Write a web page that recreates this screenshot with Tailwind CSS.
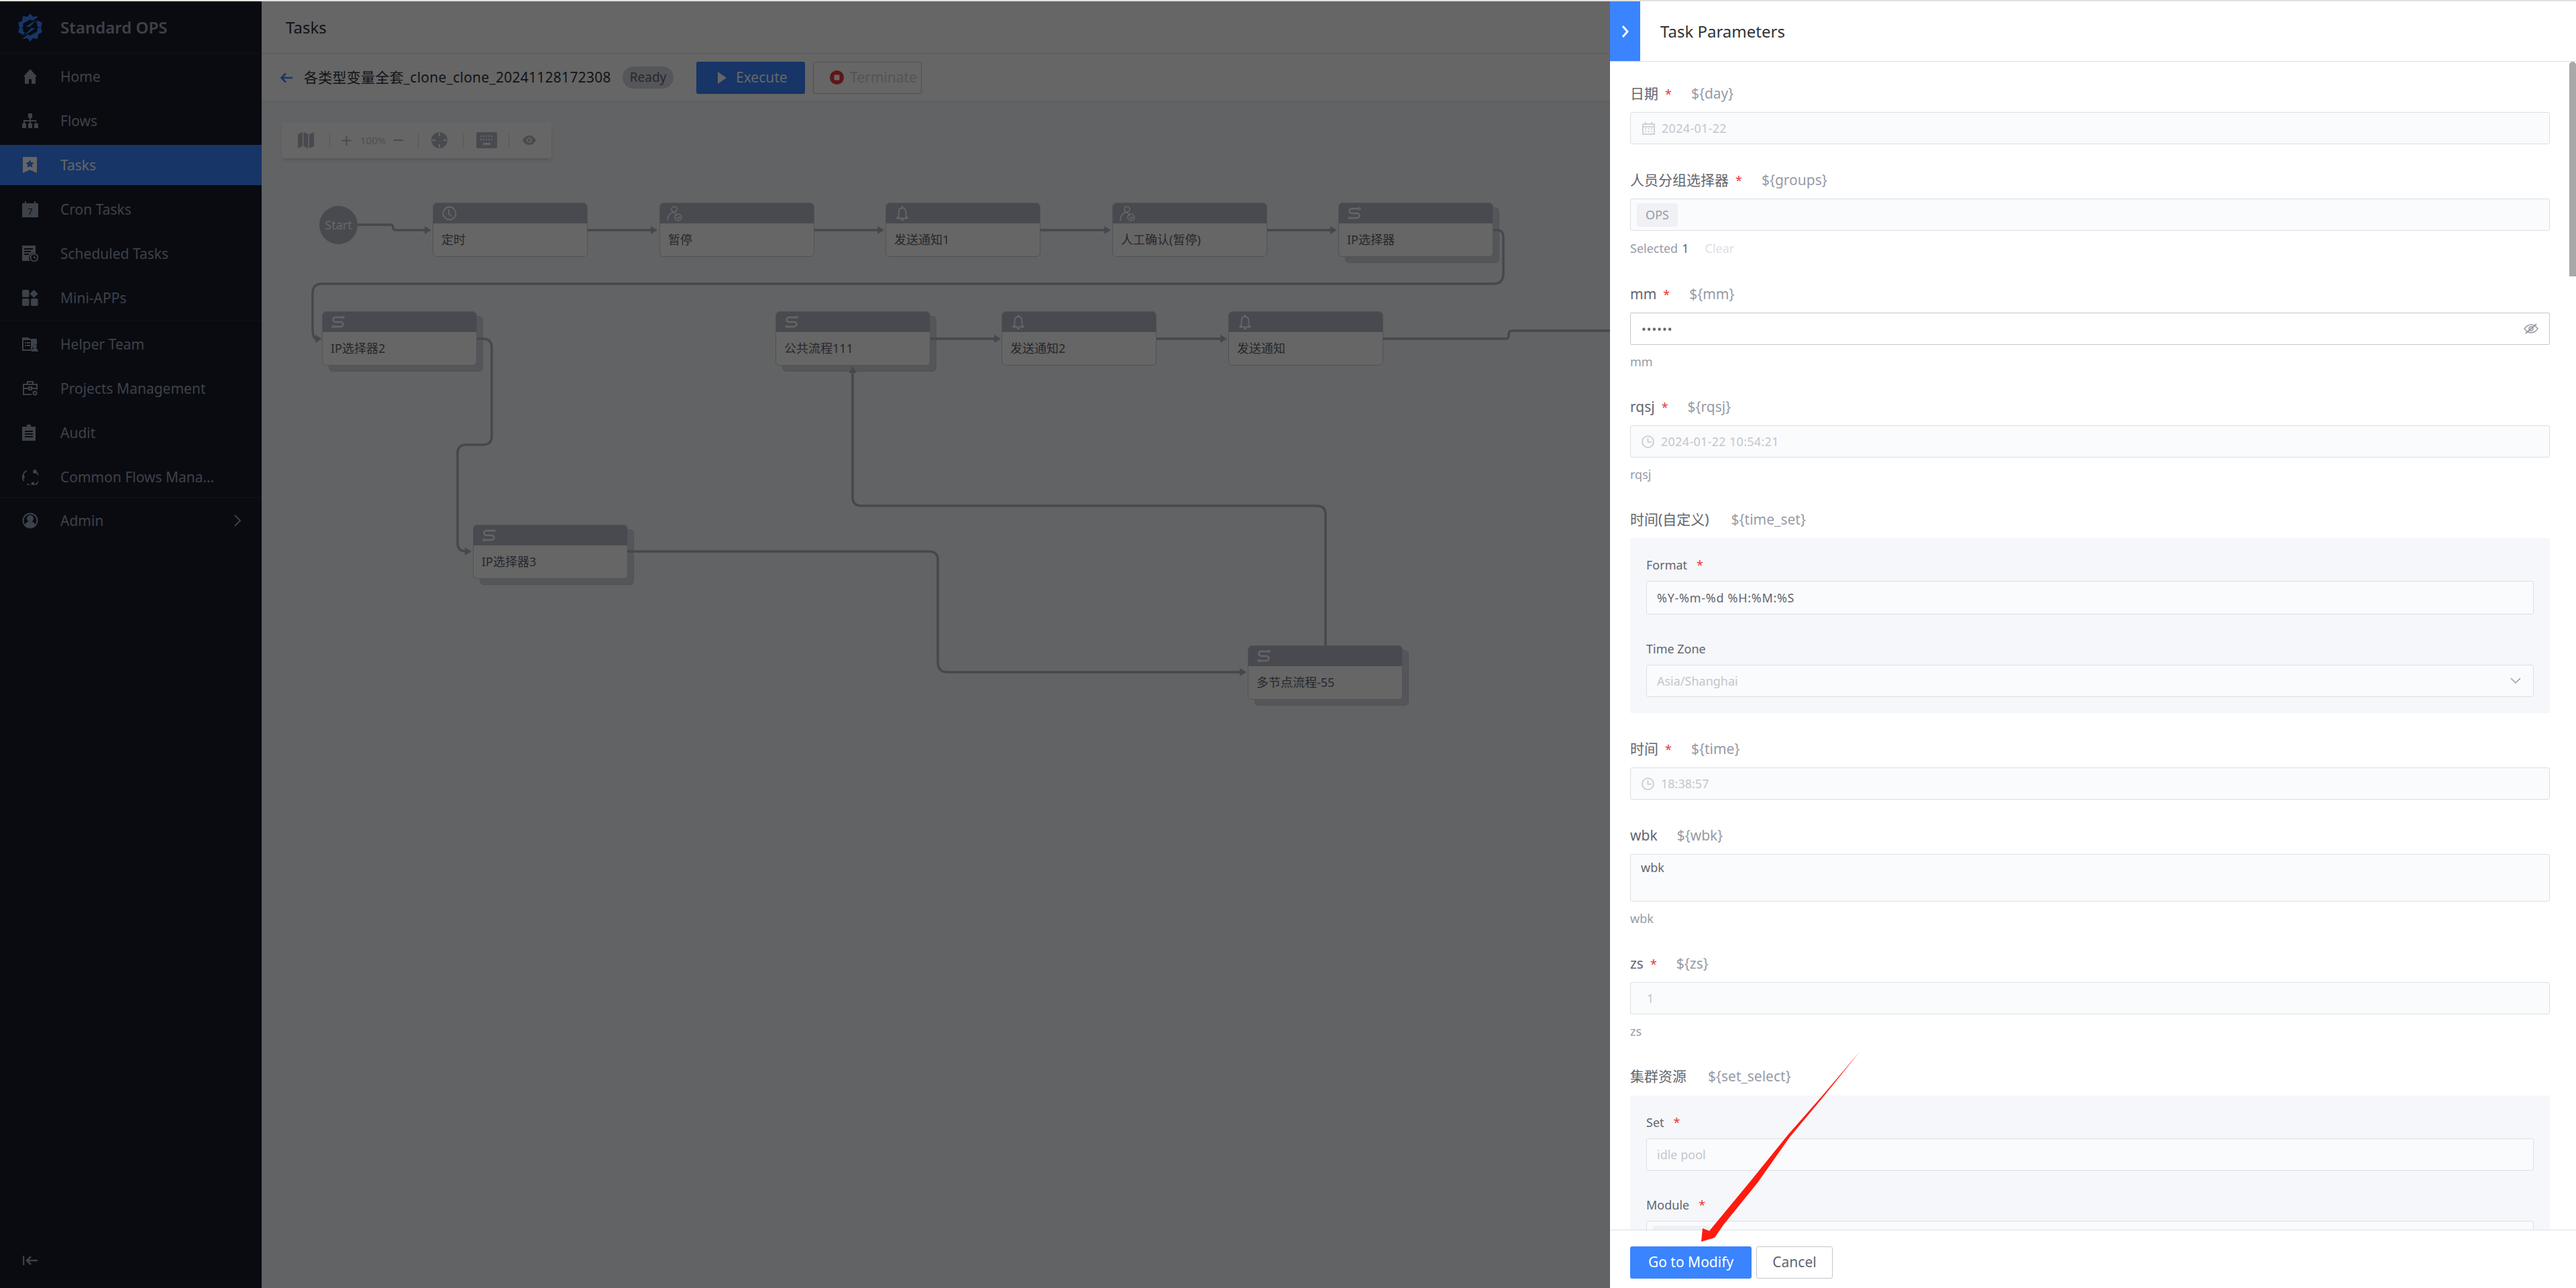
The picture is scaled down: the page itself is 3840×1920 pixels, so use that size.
<!DOCTYPE html>
<html lang="en">
  <head>
    <meta charset="UTF-8" />
    <title>Standard OPS - Tasks</title>
    <script src="https://cdn.jsdelivr.net/npm/@tailwindcss/browser@4"></script>
  </head>
  <body class="w-[3840px] h-[1920px] overflow-hidden bg-white font-['Noto_Sans','Noto_Sans_CJK_SC',sans-serif]">
    <div class="h-[2px] bg-[#e1e1e1]"></div>
    <div class="relative flex h-[1918px]">
      <!-- sidebar -->
      <aside class="w-[390px] h-full flex flex-col bg-[#191c2b] text-[#96a2b9] text-[21px]">
        <div class="h-[78px] flex items-center pl-[24px] border-b border-[#292d40]">
          <svg class="w-[42px] h-[42px] text-[#3a84ff]" viewBox="0 0 42 42" fill="currentColor">
            <path d="M21 0l4 5 7-1 1 7 6 3-2 7 2 7-6 3-1 7-7-1-4 5-4-5-7 1-1-7-6-3 2-7-2-7 6-3 1-7 7 1z"/>
            <path d="M21 9l10.500 6v12L21 33l-10.500-6V15z" fill="#191c2b"/>
            <path d="M38 3L11 21h11L4 40l28-19H21z" stroke="#191c2b" stroke-width="2"/>
          </svg>
          <span class="ml-[24px] text-[24px] font-semibold">Standard OPS</span>
        </div>
        <nav class="flex flex-col pt-[4px] [&_span]:pt-[2px]">
          <div class="flex flex-col gap-[6px] pb-[3px] border-b border-[#292d40]">
            <a class="h-[60px] flex items-center pl-[33px]">
              <svg class="w-[24px] h-[24px] mr-[33px]" viewBox="0 0 24 24" fill="currentColor"><path fill-rule="evenodd" d="M12 1l10 11h-2v11H4V12H2zM10 16v7h4v-7z"/></svg>
              <span>Home</span>
            </a>
            <a class="h-[60px] flex items-center pl-[33px]">
              <svg class="w-[24px] h-[24px] mr-[33px]" viewBox="0 0 24 24" fill="currentColor"><path d="M9 1h6v7h-2v3h8v5h3v7h-6v-7h2v-3h-7v3h2v7H9v-7h2v-3H4v3h2v7H0v-7h2v-5h9V8H9z"/></svg>
              <span>Flows</span>
            </a>
            <a class="h-[60px] flex items-center pl-[33px] bg-[#3a84ff] text-white">
              <svg class="w-[24px] h-[24px] mr-[33px]" viewBox="0 0 24 24"><path fill="#fff" d="M1 0h21v24l-10.500-5L1 24z"/><path fill="#3a84ff" d="M11.500 4l1.900 4 4.400.5-3.200 3 .9 4.400-4-2.200-4 2.200.9-4.400-3.200-3 4.400-.5z"/></svg>
              <span>Tasks</span>
            </a>
            <a class="h-[60px] flex items-center pl-[33px]">
              <svg class="w-[24px] h-[24px] mr-[33px]" viewBox="0 0 24 24"><path fill="currentColor" d="M4 0h2v3h12V0h2v3h4v21H0V3h4z"/><text x="12" y="20" text-anchor="middle" font-size="13" fill="#191c2b">7</text></svg>
              <span>Cron Tasks</span>
            </a>
            <a class="h-[60px] flex items-center pl-[33px]">
              <svg class="w-[24px] h-[24px] mr-[33px]" viewBox="0 0 24 24"><path fill="currentColor" d="M0 0h20v12a7 7 0 0 0-8 11H0z"/><path stroke="#191c2b" stroke-width="2" d="M3 5h13M3 9h10M3 13h7"/><circle cx="18" cy="18" r="5.500" fill="none" stroke="currentColor" stroke-width="2"/><path stroke="currentColor" stroke-width="1.500" fill="none" d="M18 15v3.500h3"/></svg>
              <span>Scheduled Tasks</span>
            </a>
            <a class="h-[60px] flex items-center pl-[33px]">
              <svg class="w-[24px] h-[24px] mr-[33px]" viewBox="0 0 24 24" fill="currentColor"><rect x="0" y="0" width="10.500" height="11" rx="2"/><path d="M17.500 0l6 6-6 6-6-6z"/><rect x="0" y="13" width="10.500" height="11" rx="2"/><rect x="13" y="13" width="10.500" height="11" rx="2"/></svg>
              <span>Mini-APPs</span>
            </a>
          </div>
          <div class="flex flex-col gap-[6px] pt-[5px] border-b border-[#292d40]">
            <a class="h-[60px] flex items-center pl-[33px]">
              <svg class="w-[24px] h-[24px] mr-[33px]" viewBox="0 0 24 24" fill="currentColor"><path fill-rule="evenodd" d="M0 2h9l2 2h11v9a4 4 0 0 0-6 3l-2 6H0zM2 6v14h11V6zM4 9h2v2H4zm3 0h5v2H7zm-3 4h2v2H4zm3 0h5v2H7z"/><circle cx="19" cy="15.500" r="2.800"/><path d="M14 23a5 5 0 0 1 10 0z"/></svg>
              <span>Helper Team</span>
            </a>
            <a class="h-[60px] flex items-center pl-[33px]">
              <svg class="w-[24px] h-[24px] mr-[33px]" viewBox="0 0 24 24" fill="none" stroke="currentColor" stroke-width="2"><path d="M8 6V2h8v4M14 21H2V6h20v8M2 12h8m4 0h8"/><rect x="10" y="10" width="4" height="4"/><circle cx="19" cy="19" r="2.500"/></svg>
              <span>Projects Management</span>
            </a>
            <a class="h-[60px] flex items-center pl-[33px]">
              <svg class="w-[24px] h-[24px] mr-[33px]" viewBox="0 0 24 24"><path fill="currentColor" d="M7 0h6v3h7v21H0V3h7z"/><path stroke="#191c2b" stroke-width="1.800" d="M4 10h12M4 14h12M4 18h12"/></svg>
              <span>Audit</span>
            </a>
            <a class="h-[60px] flex items-center pl-[33px]">
              <svg class="w-[24px] h-[24px] mr-[33px]" viewBox="0 0 24 24" fill="none" stroke="currentColor" stroke-width="1.800"><path d="M7 2.500A11 11 0 0 0 2.500 18M7.500 22.500A11 11 0 0 0 21 5"/><circle cx="19" cy="4" r="2" fill="currentColor"/><circle cx="1.500" cy="12" r="1.500" fill="currentColor"/><circle cx="16" cy="22" r="1.500" fill="currentColor"/></svg>
              <span class="w-[240px] truncate">Common Flows Management</span>
            </a>
          </div>
          <a class="mt-[4px] h-[60px] flex items-center pl-[33px]">
            <svg class="w-[24px] h-[24px] mr-[33px]" viewBox="0 0 24 24" fill="none" stroke="currentColor" stroke-width="2"><circle cx="12" cy="12" r="10.500"/><circle cx="12" cy="9" r="4" fill="currentColor"/><path fill="currentColor" stroke="none" d="M4.500 19a7.500 6 0 0 1 15 0 10 10 0 0 1-15 0z"/></svg>
            <span>Admin</span>
            <svg class="ml-auto mr-[30px] w-[12px] h-[18px]" viewBox="0 0 12 18" fill="none" stroke="currentColor" stroke-width="2"><path d="M2 1l8 8-8 8"/></svg>
          </a>
        </nav>
        <div class="mt-auto h-[82px] flex items-center pl-[34px]">
          <svg class="w-[22px] h-[16px]" viewBox="0 0 22 16" fill="none" stroke="currentColor" stroke-width="2.500"><path d="M1 1v14M22 8H6M12 2L6 8l6 6"/></svg>
        </div>
      </aside>

      <!-- main -->
      <main class="flex-1 flex flex-col">
        <div class="h-[78px] flex items-center pl-[36px] bg-white border-b border-[#dcdee5] text-[24px] text-[#313238]">Tasks</div>
        <div class="h-[72px] flex items-center pl-[27px] bg-white border-b border-[#dcdee5]">
          <svg class="w-[19px] h-[16px] text-[#3a84ff]" viewBox="0 0 19 16" fill="none" stroke="currentColor" stroke-width="2.500"><path d="M19 8H3M9 1.500L2.500 8 9 14.500"/></svg>
          <span class="ml-[17px] w-[456px] whitespace-nowrap tracking-[0.25px] text-[21px] text-[#313238]">各类型变量全套_clone_clone_20241128172308</span>
          <span class="ml-[19px] w-[76px] h-[33px] rounded-full flex items-center justify-center bg-[#d4d7e0] text-[#63656e] text-[19px]">Ready</span>
          <button class="ml-[34px] w-[162px] h-[48px] rounded-[3px] flex items-center pl-[32px] bg-[#3a84ff] text-white text-[21px]">
            <svg class="w-[13px] h-[18px] mr-[14px]" viewBox="0 0 13 18" fill="currentColor"><path d="M0 0l13 9-13 9z"/></svg>
            <span>Execute</span>
          </button>
          <button class="ml-[12px] w-[162px] h-[48px] rounded-[3px] flex items-center pl-[24px] border border-[#c4c6cc] text-[#d0d2da] text-[21px]">
            <svg class="w-[21px] h-[21px] mr-[9px]" viewBox="0 0 21 21"><circle cx="10.500" cy="10.500" r="10.500" fill="#ea3636"/><rect x="6.500" y="6.500" width="8" height="8" rx="1" fill="#fff"/></svg>
            <span>Terminate</span>
          </button>
        </div>

        <!-- flow canvas -->
        <div class="relative flex-1 bg-[#f5f7fb]">
          <div class="absolute left-[30px] top-[30px] w-[402px] h-[54px] flex items-center pl-[24px] bg-white rounded-[3px] shadow-md text-[#b5b8c5]">
            <svg class="w-[24px] h-[24px]" viewBox="0 0 24 24" fill="currentColor"><path d="M0 3l7-3v21l-7 3zM8.500 0l7 3v21l-7-3zM17 3l7-3v21l-7 3z"/></svg>
            <span class="ml-[23px] w-px h-[21px] bg-[#d8dae2]"></span>
            <svg class="ml-[17px] w-[15px] h-[15px]" viewBox="0 0 15 15" fill="currentColor"><path d="M6.500 0h2v6.500H15v2H8.500V15h-2V8.500H0v-2h6.500z"/></svg>
            <span class="ml-[13px] w-[37px] text-[15px] text-[#c4c6cc] whitespace-nowrap">100%</span>
            <span class="ml-[13px] w-[14px] h-[2px] bg-current"></span>
            <span class="ml-[22px] w-px h-[21px] bg-[#d8dae2]"></span>
            <svg class="ml-[19px] w-[24px] h-[24px]" viewBox="0 0 24 24"><circle cx="12" cy="12" r="12" fill="currentColor"/><path stroke="#fff" stroke-width="2" d="M12 1v5M12 18v5M1 12h5M18 12h5"/></svg>
            <span class="ml-[23px] w-px h-[21px] bg-[#d8dae2]"></span>
            <svg class="ml-[19px] w-[31px] h-[24px]" viewBox="0 0 31 24"><rect width="31" height="24" rx="2" fill="currentColor"/><path stroke="#fff" stroke-width="2" stroke-dasharray="2 2" d="M6 6h19M6 11h19"/><rect x="10" y="16" width="11" height="3" rx="1" fill="#fff"/></svg>
            <span class="ml-[17px] w-px h-[21px] bg-[#d8dae2]"></span>
            <svg class="ml-[20px] w-[20px] h-[14px]" viewBox="0 0 20 14"><path d="M0 7c3-5 6-7 10-7s7 2 10 7c-3 5-6 7-10 7S3 12 0 7z" fill="currentColor"/><circle cx="10" cy="7" r="3" fill="none" stroke="#fff" stroke-width="1.500"/></svg>
          </div>

          <div class="absolute left-[86px] top-[155px] w-[57px] h-[57px] rounded-full flex items-center justify-center bg-[#b4b8c6] text-white text-[18px]">Start</div>

          <!-- nodes -->
          <div class="absolute left-[255px] top-[150px] w-[231px] h-[81px] rounded-[6px] border border-[#c8ccd8] bg-white overflow-hidden text-[18px] text-[#63656e]">
            <div class="h-[30px] bg-[#b4b8c6] flex items-center pl-[13px]">
              <svg class="w-[22px] h-[22px] text-white" viewBox="0 0 22 22" fill="none" stroke="currentColor" stroke-width="1.800"><circle cx="11" cy="11" r="9.500"/><path d="M10 5v7l4 3"/></svg>
            </div>
            <div class="pl-[12px] pt-[11px]">定时</div>
          </div>
          <div class="absolute left-[593px] top-[150px] w-[231px] h-[81px] rounded-[6px] border border-[#c8ccd8] bg-white overflow-hidden text-[18px] text-[#63656e]">
            <div class="h-[30px] bg-[#b4b8c6] flex items-center pl-[10px]">
              <svg class="w-[23px] h-[23px] text-white" viewBox="0 0 23 23" fill="none" stroke="currentColor" stroke-width="1.600"><circle cx="11" cy="5" r="4"/><path d="M1 22c0-6 3-11 8-13 3 1 5 3 6 6"/><circle cx="17" cy="17" r="5"/><path d="M15 17l2 2 3-3"/></svg>
            </div>
            <div class="pl-[12px] pt-[11px]">暂停</div>
          </div>
          <div class="absolute left-[930px] top-[150px] w-[231px] h-[81px] rounded-[6px] border border-[#c8ccd8] bg-white overflow-hidden text-[18px] text-[#63656e]">
            <div class="h-[30px] bg-[#b4b8c6] flex items-center pl-[15px]">
              <svg class="w-[18px] h-[23px] text-white" viewBox="0 0 18 23" fill="none" stroke="currentColor" stroke-width="1.800"><path d="M9 3c-4 0-5.500 3-5.500 7v7H1.500v1.500h15V17h-2v-7c0-4-1.500-7-5.500-7zM9 0v3M7 21h4"/></svg>
            </div>
            <div class="pl-[12px] pt-[11px]">发送通知1</div>
          </div>
          <div class="absolute left-[1268px] top-[150px] w-[231px] h-[81px] rounded-[6px] border border-[#c8ccd8] bg-white overflow-hidden text-[18px] text-[#63656e]">
            <div class="h-[30px] bg-[#b4b8c6] flex items-center pl-[10px]">
              <svg class="w-[23px] h-[23px] text-white" viewBox="0 0 23 23" fill="none" stroke="currentColor" stroke-width="1.600"><circle cx="11" cy="5" r="4"/><path d="M1 22c0-6 3-11 8-13 3 1 5 3 6 6"/><circle cx="17" cy="17" r="5"/><path d="M15 17l2 2 3-3"/></svg>
            </div>
            <div class="pl-[12px] pt-[11px]">人工确认(暂停)</div>
          </div>
          <div class="absolute left-[1605px] top-[150px] w-[231px] h-[81px] text-[18px] text-[#63656e]">
            <div class="absolute left-[10px] top-[7px] -right-[9px] -bottom-[9px] rounded-[6px] border border-[#c8ccd8] bg-[#d2d6e0]"></div>
            <div class="relative h-full rounded-[6px] border border-[#c8ccd8] bg-white overflow-hidden">
              <div class="h-[30px] bg-[#b4b8c6] flex items-center pl-[13px]">
                <svg class="w-[20px] h-[20px] text-white" viewBox="0 0 20 20" fill="none" stroke="currentColor" stroke-width="2.400"><path d="M16 3H6a3.500 3.500 0 0 0 0 7h8a3.500 3.500 0 0 1 0 7H4"/><circle cx="17.500" cy="3" r="1.500" stroke-width="1.400"/><circle cx="2.500" cy="17" r="1.500" stroke-width="1.400"/></svg>
              </div>
              <div class="pl-[12px] pt-[11px]">IP选择器</div>
            </div>
          </div>
          <div class="absolute left-[90px] top-[312px] w-[231px] h-[81px] text-[18px] text-[#63656e]">
            <div class="absolute left-[10px] top-[7px] -right-[9px] -bottom-[9px] rounded-[6px] border border-[#c8ccd8] bg-[#d2d6e0]"></div>
            <div class="relative h-full rounded-[6px] border border-[#c8ccd8] bg-white overflow-hidden">
              <div class="h-[30px] bg-[#b4b8c6] flex items-center pl-[13px]">
                <svg class="w-[20px] h-[20px] text-white" viewBox="0 0 20 20" fill="none" stroke="currentColor" stroke-width="2.400"><path d="M16 3H6a3.500 3.500 0 0 0 0 7h8a3.500 3.500 0 0 1 0 7H4"/><circle cx="17.500" cy="3" r="1.500" stroke-width="1.400"/><circle cx="2.500" cy="17" r="1.500" stroke-width="1.400"/></svg>
              </div>
              <div class="pl-[12px] pt-[11px]">IP选择器2</div>
            </div>
          </div>
          <div class="absolute left-[766px] top-[312px] w-[231px] h-[81px] text-[18px] text-[#63656e]">
            <div class="absolute left-[10px] top-[7px] -right-[9px] -bottom-[9px] rounded-[6px] border border-[#c8ccd8] bg-[#d2d6e0]"></div>
            <div class="relative h-full rounded-[6px] border border-[#c8ccd8] bg-white overflow-hidden">
              <div class="h-[30px] bg-[#b4b8c6] flex items-center pl-[13px]">
                <svg class="w-[20px] h-[20px] text-white" viewBox="0 0 20 20" fill="none" stroke="currentColor" stroke-width="2.400"><path d="M16 3H6a3.500 3.500 0 0 0 0 7h8a3.500 3.500 0 0 1 0 7H4"/><circle cx="17.500" cy="3" r="1.500" stroke-width="1.400"/><circle cx="2.500" cy="17" r="1.500" stroke-width="1.400"/></svg>
              </div>
              <div class="pl-[12px] pt-[11px]">公共流程111</div>
            </div>
          </div>
          <div class="absolute left-[1103px] top-[312px] w-[231px] h-[81px] rounded-[6px] border border-[#c8ccd8] bg-white overflow-hidden text-[18px] text-[#63656e]">
            <div class="h-[30px] bg-[#b4b8c6] flex items-center pl-[15px]">
              <svg class="w-[18px] h-[23px] text-white" viewBox="0 0 18 23" fill="none" stroke="currentColor" stroke-width="1.800"><path d="M9 3c-4 0-5.500 3-5.500 7v7H1.500v1.500h15V17h-2v-7c0-4-1.500-7-5.500-7zM9 0v3M7 21h4"/></svg>
            </div>
            <div class="pl-[12px] pt-[11px]">发送通知2</div>
          </div>
          <div class="absolute left-[1441px] top-[312px] w-[231px] h-[81px] rounded-[6px] border border-[#c8ccd8] bg-white overflow-hidden text-[18px] text-[#63656e]">
            <div class="h-[30px] bg-[#b4b8c6] flex items-center pl-[15px]">
              <svg class="w-[18px] h-[23px] text-white" viewBox="0 0 18 23" fill="none" stroke="currentColor" stroke-width="1.800"><path d="M9 3c-4 0-5.500 3-5.500 7v7H1.500v1.500h15V17h-2v-7c0-4-1.500-7-5.500-7zM9 0v3M7 21h4"/></svg>
            </div>
            <div class="pl-[12px] pt-[11px]">发送通知</div>
          </div>
          <div class="absolute left-[315px] top-[630px] w-[231px] h-[81px] text-[18px] text-[#63656e]">
            <div class="absolute left-[10px] top-[7px] -right-[9px] -bottom-[9px] rounded-[6px] border border-[#c8ccd8] bg-[#d2d6e0]"></div>
            <div class="relative h-full rounded-[6px] border border-[#c8ccd8] bg-white overflow-hidden">
              <div class="h-[30px] bg-[#b4b8c6] flex items-center pl-[13px]">
                <svg class="w-[20px] h-[20px] text-white" viewBox="0 0 20 20" fill="none" stroke="currentColor" stroke-width="2.400"><path d="M16 3H6a3.500 3.500 0 0 0 0 7h8a3.500 3.500 0 0 1 0 7H4"/><circle cx="17.500" cy="3" r="1.500" stroke-width="1.400"/><circle cx="2.500" cy="17" r="1.500" stroke-width="1.400"/></svg>
              </div>
              <div class="pl-[12px] pt-[11px]">IP选择器3</div>
            </div>
          </div>
          <div class="absolute left-[1470px] top-[810px] w-[231px] h-[81px] text-[18px] text-[#63656e]">
            <div class="absolute left-[10px] top-[7px] -right-[9px] -bottom-[9px] rounded-[6px] border border-[#c8ccd8] bg-[#d2d6e0]"></div>
            <div class="relative h-full rounded-[6px] border border-[#c8ccd8] bg-white overflow-hidden">
              <div class="h-[30px] bg-[#b4b8c6] flex items-center pl-[13px]">
                <svg class="w-[20px] h-[20px] text-white" viewBox="0 0 20 20" fill="none" stroke="currentColor" stroke-width="2.400"><path d="M16 3H6a3.500 3.500 0 0 0 0 7h8a3.500 3.500 0 0 1 0 7H4"/><circle cx="17.500" cy="3" r="1.500" stroke-width="1.400"/><circle cx="2.500" cy="17" r="1.500" stroke-width="1.400"/></svg>
              </div>
              <div class="pl-[12px] pt-[11px]">多节点流程-55</div>
            </div>
          </div>

          <!-- edges, drawn in page coordinates -->
          <svg class="absolute left-0 top-0 w-[3450px] h-[1768px] pointer-events-none" viewBox="390 152 3450 1768" fill="none" stroke="#b0b4c0" stroke-width="3.500">
            <path d="M533 335H582q4 0 4 4q0 4 4 4H636"/>
            <path d="M876 343H974M1214 343H1311M1551 343H1649M1889 343H1986"/>
            <path d="M2226 343H2231q10 0 10 10V408q0 15-15 15H480q-14 0-14 14V490q0 15 6 15"/>
            <path d="M711 505H720q13 0 13 13V650q0 13-13 13H695q-13 0-13 13V809q0 13 13 13H695"/>
            <path d="M935 822H1385q13 0 13 13V987q0 15 15 15H1849"/>
            <path d="M1976 962V767q0-13-13-13H1284q-13 0-13-13V556"/>
            <path d="M1387 505H1484M1724 505H1822"/>
            <path d="M2061 505H2244q5 0 5-5V498q0-5 5-5H2400"/>
            <g fill="#b0b4c0" stroke="none">
              <path d="M633 337l10 6-10 6zM970 337l10 6-10 6zM1308 337l10 6-10 6zM1646 337l10 6-10 6zM1983 337l10 6-10 6z"/>
              <path d="M470 499l10 6-10 6zM693 816l10 6-10 6zM1848 996l10 6-10 6zM1482 499l10 6-10 6zM1819 499l10 6-10 6z"/>
              <path d="M1265 556l6-10 6 10z"/>
            </g>
          </svg>
        </div>
      </main>

      <!-- dim layer below the slider -->
      <div class="absolute inset-0 bg-black/60"></div>

      <!-- slider panel -->
      <section class="absolute right-0 top-0 bottom-0 w-[1440px] flex flex-col bg-white">
        <div class="h-[90px] shrink-0 flex items-center border-b border-[#dcdee5]">
          <div class="w-[45px] h-full flex items-center justify-center bg-[#3a84ff]">
            <svg class="w-[12px] h-[20px] text-white" viewBox="0 0 12 20" fill="none" stroke="currentColor" stroke-width="3"><path d="M2 2l7 8-7 8"/></svg>
          </div>
          <h2 class="ml-[30px] text-[24px] text-[#313238]">Task Parameters</h2>
        </div>

        <div class="relative flex-1 min-h-0 overflow-hidden pt-[33px] pl-[30px] pr-[39px] text-[21px] text-[#63656e]">
          <div class="absolute right-0 top-0 w-[10px] h-[320px] rounded-t-[5px] bg-[#a8a8a8]"></div>

          <div class="h-[30px] flex items-center">日期<span class="ml-[10px] text-[18px] text-[#ea3636]">*</span><span class="ml-[29px] text-[#979ba5]">${day}</span></div>
          <div class="mt-[12px] h-[48px] flex items-center pl-[17px] bg-[#fafbfd] border border-[#dcdee5] rounded-[3px] text-[18px] tracking-[0.3px] text-[#c4c6cc]">
            <svg class="w-[19px] h-[19px] mr-[10px]" viewBox="0 0 19 19" fill="none" stroke="currentColor" stroke-width="1.500"><rect x="1" y="3" width="17" height="15"/><path d="M1 7h17M5 0v4M14 0v4M4 10h2M8.500 10h2M13 10h2M4 14h2M8.500 14h2M13 14h2"/></svg>
            2024-01-22
          </div>

          <div class="mt-[39px] h-[30px] flex items-center">人员分组选择器<span class="ml-[10px] text-[18px] text-[#ea3636]">*</span><span class="ml-[29px] text-[#979ba5]">${groups}</span></div>
          <div class="mt-[12px] h-[48px] flex items-center pl-[9px] bg-[#fafbfd] border border-[#dcdee5] rounded-[3px] text-[18px]">
            <span class="w-[61px] h-[35px] flex items-center justify-center rounded-[4px] bg-[#f0f1f5] text-[#979ba5]">OPS</span>
          </div>
          <div class="mt-[11px] h-[30px] flex items-center text-[18px] text-[#979ba5]">Selected<span class="ml-[6px] text-[#63656e]">1</span><span class="ml-[24px] text-[#dcdee5]">Clear</span></div>

          <div class="mt-[39px] h-[30px] flex items-center">mm<span class="ml-[10px] text-[18px] text-[#ea3636]">*</span><span class="ml-[29px] text-[#979ba5]">${mm}</span></div>
          <div class="mt-[12px] h-[48px] flex items-center justify-between pl-[16px] pr-[16px] bg-white border border-[#c4c6cc] rounded-[2px] text-[18px]">
            <span class="tracking-[1px] leading-none">••••••</span>
            <svg class="w-[22px] h-[16px] text-[#979ba5]" viewBox="0 0 22 16" fill="none" stroke="currentColor" stroke-width="1.500"><path d="M1 8c3-4 6-6 10-6s7 2 10 6c-3 4-6 6-10 6S4 12 1 8z"/><circle cx="11" cy="8" r="3"/><path stroke-width="2" d="M3 15L19 1"/></svg>
          </div>
          <div class="mt-[11px] h-[28px] flex items-center text-[18px] text-[#979ba5]">mm</div>

          <div class="mt-[39px] h-[30px] flex items-center">rqsj<span class="ml-[10px] text-[18px] text-[#ea3636]">*</span><span class="ml-[29px] text-[#979ba5]">${rqsj}</span></div>
          <div class="mt-[12px] h-[48px] flex items-center pl-[16px] bg-[#fafbfd] border border-[#dcdee5] rounded-[3px] text-[18px] tracking-[0.3px] text-[#c4c6cc]">
            <svg class="w-[19px] h-[19px] mr-[10px]" viewBox="0 0 19 19" fill="none" stroke="currentColor" stroke-width="1.600"><circle cx="9.500" cy="9.500" r="8.500"/><path d="M9.500 4v6H15"/></svg>
            2024-01-22 10:54:21
          </div>
          <div class="mt-[11px] h-[28px] flex items-center text-[18px] text-[#979ba5]">rqsj</div>

          <div class="mt-[39px] h-[30px] flex items-center">时间(自定义)<span class="ml-[33px] text-[#979ba5]">${time_set}</span></div>
          <div class="mt-[12px] h-[261px] pt-[25px] px-[24px] bg-[#f5f7fb] text-[18px]">
            <div class="h-[30px] flex items-center">Format<span class="ml-[14px] text-[#ea3636]">*</span></div>
            <div class="mt-[9px] h-[50px] flex items-center pl-[15px] bg-[#fafbfd] border border-[#dcdee5] rounded-[3px] tracking-[0.7px]">%Y-%m-%d %H:%M:%S</div>
            <div class="mt-[36px] h-[30px] flex items-center">Time Zone</div>
            <div class="mt-[9px] h-[48px] flex items-center justify-between pl-[15px] pr-[17px] bg-[#fafbfd] border border-[#dcdee5] rounded-[3px] text-[#c4c6cc]">
              Asia/Shanghai
              <svg class="w-[18px] h-[10px] text-[#979ba5]" viewBox="0 0 18 10" fill="none" stroke="currentColor" stroke-width="1.500"><path d="M2 1l7 7 7-7"/></svg>
            </div>
          </div>

          <div class="mt-[39px] h-[30px] flex items-center">时间<span class="ml-[10px] text-[18px] text-[#ea3636]">*</span><span class="ml-[29px] text-[#979ba5]">${time}</span></div>
          <div class="mt-[12px] h-[48px] flex items-center pl-[16px] bg-[#fafbfd] border border-[#dcdee5] rounded-[3px] text-[18px] text-[#c4c6cc]">
            <svg class="w-[19px] h-[19px] mr-[10px]" viewBox="0 0 19 19" fill="none" stroke="currentColor" stroke-width="1.600"><circle cx="9.500" cy="9.500" r="8.500"/><path d="M9.500 4v6H15"/></svg>
            18:38:57
          </div>

          <div class="mt-[39px] h-[30px] flex items-center">wbk<span class="ml-[29px] text-[#979ba5]">${wbk}</span></div>
          <div class="mt-[12px] h-[71px] pl-[15px] pt-[6px] bg-[#fafbfd] border border-[#dcdee5] rounded-[3px] text-[18px]">wbk</div>
          <div class="mt-[11px] h-[28px] flex items-center text-[18px] text-[#979ba5]">wbk</div>

          <div class="mt-[39px] h-[30px] flex items-center">zs<span class="ml-[10px] text-[18px] text-[#ea3636]">*</span><span class="ml-[29px] text-[#979ba5]">${zs}</span></div>
          <div class="mt-[12px] h-[48px] flex items-center pl-[24px] bg-[#fafbfd] border border-[#dcdee5] rounded-[3px] text-[18px] text-[#c4c6cc]">1</div>
          <div class="mt-[11px] h-[28px] flex items-center text-[18px] text-[#979ba5]">zs</div>

          <div class="mt-[39px] h-[30px] flex items-center">集群资源<span class="ml-[32px] text-[#979ba5]">${set_select}</span></div>
          <div class="mt-[13px] pt-[25px] px-[24px] h-[400px] bg-[#f5f7fb] text-[18px]">
            <div class="h-[30px] flex items-center">Set<span class="ml-[14px] text-[#ea3636]">*</span></div>
            <div class="mt-[9px] h-[48px] flex items-center pl-[15px] bg-[#fafbfd] border border-[#dcdee5] rounded-[3px] text-[#c4c6cc]">idle pool</div>
            <div class="mt-[36px] h-[30px] flex items-center">Module<span class="ml-[14px] text-[#ea3636]">*</span></div>
            <div class="mt-[9px] h-[48px] flex items-center pl-[9px] bg-[#fafbfd] border border-[#dcdee5] rounded-[3px]">
              <span class="w-[85px] h-[35px] rounded-[4px] bg-[#f0f1f5]"></span>
            </div>
          </div>
        </div>

        <div class="h-[87px] shrink-0 flex items-start gap-[7px] pl-[30px] pt-[24px] bg-white border-t border-[#dcdee5] text-[21px]">
          <button class="w-[181px] h-[48px] rounded-[3px] bg-[#3a84ff] text-white">Go to Modify</button>
          <button class="w-[114px] h-[48px] rounded-[3px] bg-white border border-[#c4c6cc] text-[#63656e]">Cancel</button>
        </div>
      </section>

      <!-- red annotation arrow -->
      <svg class="absolute left-0 top-0 w-[3840px] h-[1918px] pointer-events-none" viewBox="0 2 3840 1918">
        <path fill="#ff1a0f" d="M2773 1567L2718 1635L2668 1695L2620 1763L2569 1826L2556 1845L2536 1851L2538 1831L2548 1835L2610 1760L2665 1692L2716 1634Z"/>
      </svg>
    </div>
  </body>
</html>
